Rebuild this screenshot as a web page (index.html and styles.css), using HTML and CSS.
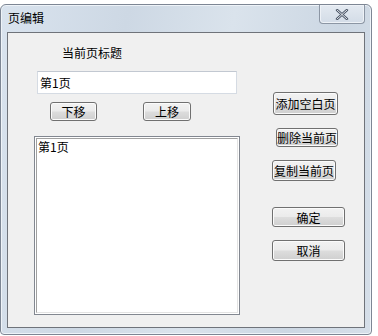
FILE: index.html
```html
<!DOCTYPE html>
<html lang="zh-CN">
<head>
    <meta charset="UTF-8">
    <title>页编辑</title>
    <link rel="stylesheet" href="styles.css">
</head>
<body>
    <div class="window">
        <div class="titlebar">
            <span class="title">页编辑</span>
            <button class="close-btn" title="关闭">
                <svg width="14" height="11" viewBox="0 0 14 11">
                    <path d="M2 1 L12 10 M12 1 L2 10" stroke="#4a5566" stroke-width="2.4" stroke-linecap="round" fill="none"/>
                    <path d="M2 1 L12 10 M12 1 L2 10" stroke="#f4f6f9" stroke-width="0.9" stroke-linecap="round" fill="none"/>
                </svg>
            </button>
        </div>
        <div class="client">
            <div class="left-col">
                <div class="label">当前页标题</div>
                <input type="text" class="title-input" value="第1页">
                <div class="move-row">
                    <button class="btn btn-down">下移</button>
                    <button class="btn btn-up">上移</button>
                </div>
                <div class="listbox">
                    <div class="list-inner">
                        <div class="list-item">第1页</div>
                    </div>
                </div>
            </div>
            <div class="right-col">
                <button class="btn btn-add">添加空白页</button>
                <button class="btn btn-del">删除当前页</button>
                <button class="btn btn-copy">复制当前页</button>
                <button class="btn btn-ok">确定</button>
                <button class="btn btn-cancel">取消</button>
            </div>
        </div>
    </div>
</body>
</html>
```

FILE: styles.css
```css
* {
    box-sizing: border-box;
    margin: 0;
    padding: 0;
}

body {
    width: 378px;
    height: 336px;
    overflow: hidden;
    background: #ffffff;
    font-family: "Noto Sans CJK SC", "DejaVu Sans", sans-serif;
    font-size: 12px;
    color: #000;
}

.window {
    width: 372px;
    height: 331px;
    margin-top: 4px;
    border: 1px solid #7d8694;
    border-radius: 6px 6px 4px 4px;
    background: linear-gradient(100deg, #d9e3ee 0%, #cdd8e4 30%, #dae3ec 55%, #ccd7e3 80%, #d6dfe9 100%);
    box-shadow: inset 0 0 0 1px #eef3f8;
    display: flex;
    flex-direction: column;
}

.titlebar {
    height: 27px;
    display: flex;
    align-items: flex-start;
    justify-content: space-between;
    padding-left: 7px;
    padding-right: 6px;
}

.title {
    margin-top: 6px;
    font-size: 12px;
    line-height: 14px;
    color: #000;
}

.close-btn {
    width: 46px;
    height: 19px;
    border: 1px solid #8c96a4;
    border-top: none;
    border-radius: 0 0 4px 4px;
    background: linear-gradient(#e4eaf1, #d3dce7);
    box-shadow: inset 0 0 0 1px #eef2f7;
    display: flex;
    align-items: center;
    justify-content: center;
    padding-top: 1px;
}

.client {
    flex: 1;
    margin: 0 6px 6px 6px;
    border: 1px solid #6f737a;
    background: #f0f0f0;
    display: flex;
}

.left-col {
    width: 264px;
    padding-top: 12px;
    display: flex;
    flex-direction: column;
}

.label {
    margin-left: 54px;
    line-height: 16px;
}

.title-input {
    width: 200px;
    height: 23px;
    margin-top: 10px;
    margin-left: 29px;
    border: 1px solid #d5dbe3;
    border-top-color: #c2c8d1;
    background: #fff;
    padding-left: 2px;
    font-family: inherit;
    font-size: 12px;
    outline: none;
}

.move-row {
    display: flex;
    margin-top: 8px;
}

.btn {
    height: 19px;
    border: 1px solid #707070;
    border-radius: 3px;
    background: linear-gradient(#f2f2f2 0%, #ebebeb 48%, #dddddd 52%, #cfcfcf 100%);
    box-shadow: inset 0 0 0 1px #fbfbfb;
    font-family: inherit;
    font-size: 12px;
    line-height: 15px;
    color: #000;
    padding: 0;
}

.btn-down {
    width: 47px;
    margin-left: 42px;
}

.btn-up {
    width: 48px;
    margin-left: 46px;
}

.listbox {
    width: 206px;
    height: 179px;
    margin-top: 15px;
    margin-left: 26px;
    border: 1px solid #828790;
    padding: 1px;
    background: #fff;
}

.list-inner {
    height: 100%;
    border: 1px solid;
    border-color: #a0a0a0 #e3e3e3 #e3e3e3 #a0a0a0;
    padding: 1px 0 0 1px;
}

.list-item {
    line-height: 14px;
}

.right-col {
    padding-top: 59px;
    display: flex;
    flex-direction: column;
    align-items: flex-start;
}

.btn-add {
    width: 65px;
    height: 23px;
    margin-left: 1px;
}

.btn-del {
    width: 62px;
    margin-top: 13px;
    margin-left: 4px;
}

.btn-copy {
    width: 64px;
    height: 21px;
    margin-top: 13px;
}

.btn-ok {
    width: 73px;
    height: 20px;
    margin-top: 26px;
}

.btn-cancel {
    width: 73px;
    height: 21px;
    margin-top: 13px;
}
```
